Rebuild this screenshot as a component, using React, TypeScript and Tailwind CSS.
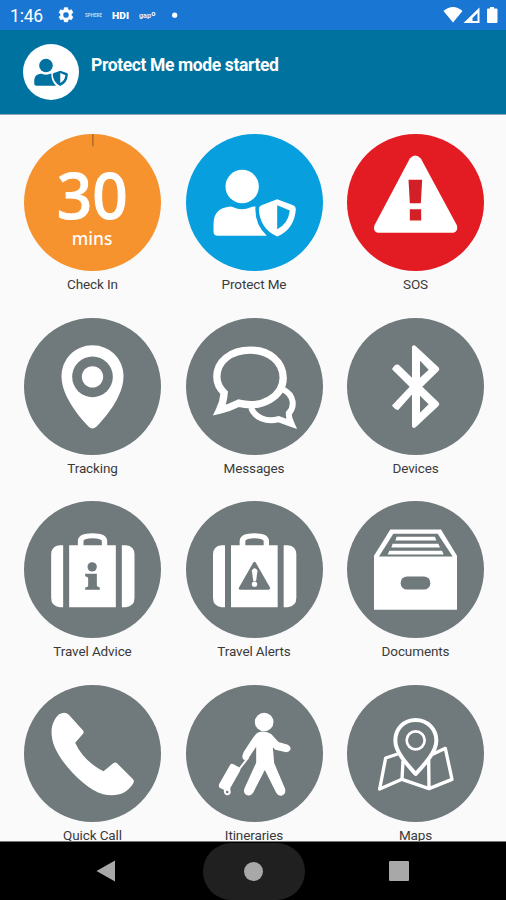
import type { ReactNode } from "react";

const GREY = "#70797b";

function ProtectGlyph({ bg }: { bg: string }) {
  return (
    <>
      <circle cx="201" cy="184" r="50" />
      <path d="M161 245Q168 243 174 246Q200 258 227 246Q233 243 241 244Q237 296 275 332H128Q115 332 115 319V297Q115 250 161 245Z" />
      <path d="M306 222L354 240Q362 243 362 252Q358 312 306 334Q254 310 251 252Q251 243 259 240Z" />
      <path d="M306 240L344 256Q339 296 306 312Z" fill={bg} />
    </>
  );
}

function Suitcase() {
  return (
    <>
      <path d="M160 150V336H150Q124 334 124 308V178Q124 152 150 150ZM336 150H348Q374 152 374 178V308Q374 334 348 336H336Z" />
      <path d="M178 150H204V136Q206 114 248 114Q290 114 292 136V150H318V336H178ZM221 150H276V137Q272 129 248 129Q224 129 221 137Z" fillRule="evenodd" />
    </>
  );
}

type Tile = { label: string; color: string; box: string; art: ReactNode };

const tiles: Tile[] = [
  {
    label: "Check In",
    color: "#f6932f",
    box: "42.5 26.5 411 411",
    art: (
      <>
        <path d="M249 26V63" stroke="#a86624" strokeWidth="4" />
        <text x="247" y="281" textAnchor="middle" fontFamily="'Noto Sans', sans-serif" fontSize="192" fontWeight="500" stroke="white" strokeWidth="3" textLength="213" lengthAdjust="spacingAndGlyphs">30</text>
        <text x="247" y="360" textAnchor="middle" fontFamily="'Noto Sans', sans-serif" fontSize="53" fontWeight="500" textLength="122" lengthAdjust="spacingAndGlyphs">mins</text>
      </>
    ),
  },
  { label: "Protect Me", color: "#079fde", box: "32.5 26.5 411 411", art: <ProtectGlyph bg="#079fde" /> },
  {
    label: "SOS",
    color: "#e31b23",
    box: "21.5 26.5 411 411",
    art: (
      <>
        <path d="M210 100Q226 82 243 100L351 300Q356 318 341 323H114Q98 319 104 300Z" />
        <path d="M206 164H247L243 234H210ZM210 252H244V286H210Z" fill="#d31f26" />
      </>
    ),
  },
  {
    label: "Tracking",
    color: GREY,
    box: "42.5 22.5 411 411",
    art: (
      <>
        <path d="M248 104C196 104 155 145 155 197C155 258 211 322 236 348Q248 360 260 348C286 321 341 258 341 197C341 145 300 104 248 104Z" />
        <circle cx="248" cy="199" r="61" fill={GREY} />
        <circle cx="248" cy="199" r="32" />
      </>
    ),
  },
  {
    label: "Messages",
    color: GREY,
    box: "32.5 22.5 411 411",
    art: (
      <g fill="none" stroke="white">
        <path d="M322 236C360 255 358 290 341 308Q340 320 349 340Q326 332 310 326C275 336 239 322 228 292" strokeWidth="18" />
        <path d="M226 119C166 119 125 153 125 199Q125 226 147 247Q145 275 133 299Q160 293 190 278C262 296 324 257 324 202C324 154 282 119 226 119Z" strokeWidth="22" />
      </g>
    ),
  },
  {
    label: "Devices",
    color: GREY,
    box: "516 22.5 411 411",
    art: (
      <>
        <path d="M711 109Q714 102 721 106L791 171Q795 176 791 181L742 229L791 276Q795 281 791 286L721 351Q714 355 711 348V252L671 297Q664 302 651 285L704 229L651 176Q660 158 671 163L711 202Z" />
        <path d="M735 151L761 178L735 202ZM735 256L761 281L735 307Z" fill={GREY} />
      </>
    ),
  },
  {
    label: "Travel Advice",
    color: GREY,
    box: "42.5 17.5 411 411",
    art: (
      <>
        <Suitcase />
        <g fill={GREY}>
          <circle cx="247" cy="215" r="14" />
          <path d="M226 236H261V271Q262 276 270 277V284H226V277Q235 276 235 270V249Q235 244 226 243Z" />
        </g>
      </>
    ),
  },
  {
    label: "Travel Alerts",
    color: GREY,
    box: "32.5 17.5 411 411",
    art: (
      <>
        <g transform="translate(-10.5 0)"><Suitcase /></g>
        <path d="M234 203Q238 197 242 203L284 276Q287 283 279 284H197Q188 283 192 276Z" fill={GREY} />
        <path d="M230 226Q238 213 247 226L243 256Q238 260 234 256Z" />
        <circle cx="238" cy="267" r="8" />
      </>
    ),
  },
  {
    label: "Documents",
    color: GREY,
    box: "516 17.5 411 411",
    art: (
      <>
        <path d="M646 103H798L846 182V344H597V182Z" />
        <path d="M655 116H788L833 184H612Z" fill={GREY} />
        <path d="M665 125H780L784 136H661ZM653 146H790L795 157H649ZM643 167H801L806 178H638Z" />
        <rect x="677" y="244" width="89" height="39" rx="19" fill={GREY} />
      </>
    ),
  },
  {
    label: "Quick Call",
    color: GREY,
    box: "42.5 13 411 411",
    art: (
      <path d="M148 101Q165 91 177 102L219 149Q224 154 219 160L196 186C214 224 242 252 281 272L311 247Q318 243 323 249L369 295Q375 301 369 310C352 338 320 350 280 341C225 325 155 250 133 196C120 160 122 124 148 101Z" />
    ),
  },
  {
    label: "Itineraries",
    color: GREY,
    box: "32.5 13 411 411",
    art: (
      <>
        <circle cx="267" cy="124" r="28" />
        <path d="M250 155Q270 148 288 160L310 184L338 192Q350 199 345 208Q341 216 330 214L300 207L293 200L297 247L330 325Q333 340 320 345Q309 347 303 336L269 268L234 336Q226 348 213 343Q203 337 208 323L243 246V198L219 234Q209 242 203 234Q199 228 206 213L229 178Q240 160 250 155Z" />
        <path d="M219 231L190 268" fill="none" stroke="white" strokeWidth="6" />
        <path d="M165 252Q169 247 175 251L194 261Q198 265 194 272L165 323L167 336Q163 346 152 343Q143 336 147 328L133 321Q129 316 132 310Z" />
        <circle cx="156" cy="334" r="4" fill={GREY} />
      </>
    ),
  },
  {
    label: "Maps",
    color: GREY,
    box: "516 13 411 411",
    art: (
      <g fill="none" stroke="white" strokeLinejoin="round">
        <path d="M668 220L632 232L614 325L681 296L762 324L831 296L811 203L773 221M684 240L681 296M761 238L762 324" strokeWidth="10" />
        <path d="M722 118C686 118 661 145 661 180C661 214 697 252 722 280C748 252 784 214 784 180C784 145 757 118 722 118Z" strokeWidth="12" fill={GREY} />
        <circle cx="722" cy="179" r="27" strokeWidth="8" />
      </g>
    ),
  },
];

function StatusBar() {
  return (
    <div className="flex h-[30px] shrink-0 items-center bg-[#1976d2] pr-[7px] pl-[10px] text-white">
      <span className="w-[35px] pt-[2px] text-[17.5px] leading-[28px] tracking-[-0.2px]">1:46</span>
      <svg className="ml-[12px] h-[18px] w-[18px]" viewBox="0 0 24 24" fill="white">
        <path fillRule="evenodd" d="M9.7 2h4.600l.5 2.800 1.700 1 2.700-1 2.300 4-2.200 1.900v2l2.200 1.800-2.300 4-2.700-1-1.700 1-.5 2.800H9.700l-.5-2.800-1.700-1-2.700 1-2.300-4 2.200-1.800v-2L2.500 8.800l2.300-4 2.700 1 1.700-1zM12 8a4 4 0 1 0 0 8 4 4 0 0 0 0-8z" stroke="white" strokeWidth=".5" />
      </svg>
      <svg className="ml-[9px] h-[20px] w-[100px]" viewBox="0 0 100 20" fill="white" fontFamily="Roboto, sans-serif">
        <text x="1" y="12.4" fontSize="5.5" fontWeight="700" textLength="17" lengthAdjust="spacingAndGlyphs" opacity=".7">SPHERE</text>
        <text x="28" y="13.7" fontSize="9.5" fontWeight="900" textLength="17" lengthAdjust="spacingAndGlyphs">HDI</text>
        <text x="55" y="13" fontSize="8" fontWeight="700" textLength="12" lengthAdjust="spacingAndGlyphs" opacity=".9">gap</text>
        <circle cx="69.5" cy="9" r="1.500" fill="none" stroke="white" strokeWidth="1.100" />
        <circle cx="90.700" cy="10.200" r="2.600" />
      </svg>
      <svg className="ml-auto h-[20px] w-[56px]" viewBox="0 0 56 20" fill="white">
        <path d="M.5 6Q10 -2 19.500 6L10 17.500Z" />
        <path fillRule="evenodd" d="M36.500 2.500V18H20.500ZM34.500 8L29.500 13V16H34.500Z" />
        <path d="M47 2H51V3.500H53.500Q54.500 3.500 54.500 4.500V17Q54.500 18 53.500 18H45Q44 18 44 17V4.500Q44 3.500 45 3.500H47Z" />
      </svg>
    </div>
  );
}

export default function App() {
  return (
    <div className="flex h-[900px] w-[506px] flex-col overflow-hidden bg-[#fafafa] font-['Roboto',sans-serif]">
      <StatusBar />
      <header className="flex h-[85px] shrink-0 items-start border-b border-[#8da5bd] bg-[#0072a0] pt-[14px] pl-[23px]">
        <div className="h-[56px] w-[56px] rounded-full bg-white">
          <svg className="h-full w-full" viewBox="32.5 26.5 411 411" fill="#0072a0">
            <ProtectGlyph bg="white" />
          </svg>
        </div>
        <h1 className="mt-[9px] ml-[12px] text-[17.5px] leading-[24px] font-bold tracking-[-0.38px] text-white">Protect Me mode started</h1>
      </header>
      <main className="grid min-h-0 flex-1 auto-rows-[183.5px] grid-cols-[137px_137px_137px] content-start gap-x-[24.5px] overflow-hidden pt-[19.1px] pl-[24px]">
        {tiles.map((tile) => (
          <div key={tile.label} className="flex flex-col items-center">
            <div className="h-[137px] w-[137px] shrink-0 rounded-full" style={{ backgroundColor: tile.color }}>
              <svg className="h-full w-full" viewBox={tile.box} fill="white">
                {tile.art}
              </svg>
            </div>
            <span className="mt-[3px] text-[13.5px] leading-[20px] tracking-[-0.12px] whitespace-nowrap text-[#3a3a3a]">{tile.label}</span>
          </div>
        ))}
      </main>
      <nav className="grid h-[59px] shrink-0 grid-cols-[161px_185px_160px] border-t border-[#777] bg-black">
        <div className="flex items-center pl-[96px]">
          <svg className="h-[22px] w-[19px]" viewBox="0 0 19 22" fill="#a8a8a8"><path d="M.5 11L19 .5V21.500Z" /></svg>
        </div>
        <div className="flex justify-center pt-[1px]">
          <div className="flex h-[57px] w-[102px] items-center justify-center rounded-full bg-[#202020]">
            <div className="h-[19px] w-[19px] rounded-full bg-[#a8a8a8]" />
          </div>
        </div>
        <div className="flex items-center pl-[43px]">
          <div className="h-[20px] w-[20px] rounded-[1px] bg-[#a8a8a8]" />
        </div>
      </nav>
    </div>
  );
}
